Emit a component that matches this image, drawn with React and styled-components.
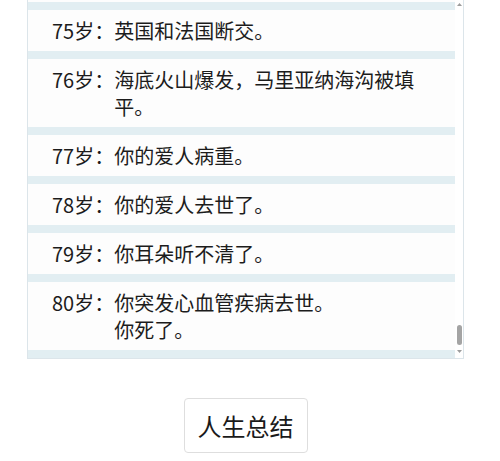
import React, { useLayoutEffect, useRef } from "react";
import styled, { createGlobalStyle } from "styled-components";

const GlobalStyle = createGlobalStyle`
  html, body {
    margin: 0;
    padding: 0;
    background: #ffffff;
    overflow: hidden;
  }
  body {
    font-family: "Noto Sans CJK SC", "Noto Sans", sans-serif;
    color: #1c1c1c;
  }
`;

const fillers = [
  "你出生了，是个男孩。",
  "你学会了走路。",
  "你上了幼儿园。",
  "你在学校里交到了好朋友。",
  "你考试得了第一名，老师表扬了你。",
  "你迷上了电子游戏。",
  "什么也没发生。",
  "你开始长青春痘了。",
  "你参加了高考。",
  "你去外地上了大学。",
  "你找到了第一份工作，工资不高。",
  "你和同事吵了一架。",
  "你结婚了。",
  "你的孩子出生了。",
  "你换了一份工作。",
  "你开始掉头发了。",
];

const events = [];
for (let age = 0; age < 75; age++) {
  events.push({ age, lines: [fillers[age % fillers.length]] });
}
events.push(
  { age: 75, lines: ["英国和法国断交。"] },
  { age: 76, lines: ["海底火山爆发，马里亚纳海沟被填平。"] },
  { age: 77, lines: ["你的爱人病重。"] },
  { age: 78, lines: ["你的爱人去世了。"] },
  { age: 79, lines: ["你耳朵听不清了。"] },
  { age: 80, lines: ["你突发心血管疾病去世。", "你死了。"] }
);

const Arrow = ({ down }) => (
  <ArrowBox>
    <svg width="5" height="3" viewBox="0 0 5 3">
      <path d={down ? "M0 0H5L2.5 3Z" : "M0 3H5L2.5 0Z"} fill="#9c9c9c" />
    </svg>
  </ArrowBox>
);

function App() {
  const scrollRef = useRef(null);

  useLayoutEffect(() => {
    const el = scrollRef.current;
    if (el) el.scrollTop = el.scrollHeight;
  }, []);

  return (
    <Page>
      <GlobalStyle />
      <Frame>
        <Scroller ref={scrollRef}>
          <EventList>
            {events.map((ev) => (
              <EventRow key={ev.age}>
                <Age>{ev.age}岁：</Age>
                <Text>
                  {ev.lines.map((line, i) => (
                    <div key={i}>{line}</div>
                  ))}
                </Text>
              </EventRow>
            ))}
          </EventList>
        </Scroller>
        <ScrollTrack>
          <Arrow />
          <TrackSpace />
          <Thumb />
          <Arrow down />
        </ScrollTrack>
      </Frame>
      <SummaryButton>人生总结</SummaryButton>
    </Page>
  );
}

export default App;

const Page = styled.div`
  width: 491px;
  display: flex;
  flex-direction: column;
  align-items: center;
`;

const Frame = styled.div`
  box-sizing: border-box;
  width: 437px;
  height: 359px;
  display: flex;
  background: #ffffff;
  border: 1px solid #dce5ea;
  border-top: none;
`;

const Scroller = styled.div`
  flex: 1;
  min-width: 0;
  overflow: hidden;
  background: #e2eef2;
`;

const ScrollTrack = styled.div`
  flex: none;
  width: 8px;
  display: flex;
  flex-direction: column;
  align-items: center;
  padding-bottom: 3px;
  background: #ffffff;
`;

const ArrowBox = styled.div`
  height: 8px;
  display: flex;
  align-items: center;
  justify-content: center;
`;

const TrackSpace = styled.div`
  flex: 1;
`;

const Thumb = styled.div`
  width: 5px;
  height: 20px;
  margin-bottom: 2px;
  border-radius: 3px;
  background: #a4a4a4;
`;

const EventList = styled.ul`
  list-style: none;
  margin: 0;
  padding: 8px 0;
  display: flex;
  flex-direction: column;
  gap: 8px;
`;

const EventRow = styled.li`
  display: flex;
  padding: 7px 24px;
  background: #fdfdfd;
  font-size: 20px;
  line-height: 27px;
`;

const Age = styled.span`
  flex: none;
  white-space: nowrap;
`;

const Text = styled.div`
  flex: 1;
  min-width: 0;
`;

const SummaryButton = styled.button`
  margin-top: 39px;
  height: 55px;
  padding: 0 13px;
  background: #ffffff;
  border: 1px solid #dedede;
  border-radius: 4px;
  font-family: "Noto Sans CJK SC", "Noto Sans", sans-serif;
  font-size: 24px;
  color: #1a1a1a;
`;
